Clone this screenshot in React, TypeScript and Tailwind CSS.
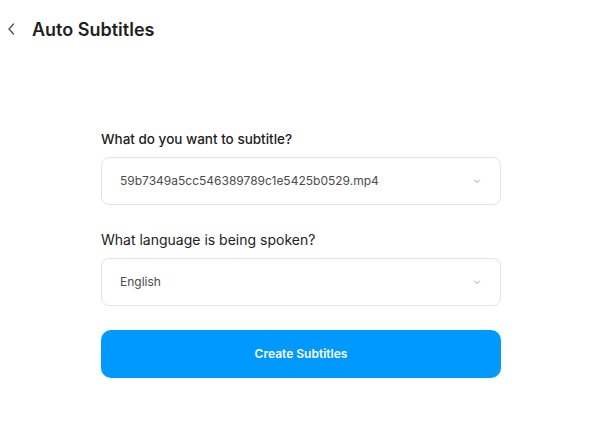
import React from "react";

function Chevron() {
  return (
    <svg width="10" height="10" viewBox="0 0 10 10" fill="none" stroke="#9ca3af" strokeWidth="1" strokeLinecap="round" strokeLinejoin="round">
      <path d="M2.5 4 L5 6.5 L7.5 4" />
    </svg>
  );
}

function Select({ value }: { value: string }) {
  return (
    <div className="flex h-[48px] w-[400px] items-center justify-between rounded-[8px] border border-[#e3e3e3] bg-white pl-[18px] pr-[18px]">
      <span className="text-[12px] text-[#4b4b4b]">{value}</span>
      <Chevron />
    </div>
  );
}

export default function App() {
  return (
    <div className="h-[444px] w-[612px] bg-white" style={{ fontFamily: "Inter, 'Noto Sans', sans-serif" }}>
      <div className="flex h-[58px] items-center pl-[7px]">
        <svg width="10" height="14" viewBox="0 0 10 14" fill="none" stroke="#555" strokeWidth="1.4" strokeLinecap="round" strokeLinejoin="round">
          <path d="M6.5 2 L2 7 L6.5 12" />
        </svg>
        <span className="ml-[15px] text-[18px] font-semibold text-[#1f1f1f]">Auto Subtitles</span>
      </div>
      <div className="ml-[101px] mt-[71px] flex w-[400px] flex-col">
        <div className="mb-[8px] text-[13.5px] font-medium leading-[20px] text-[#222]">What do you want to subtitle?</div>
        <Select value="59b7349a5cc546389789c1e5425b0529.mp4" />
        <div className="mb-[8px] mt-[25px] text-[14px] leading-[20px] text-[#222]">What language is being spoken?</div>
        <Select value="English" />
        <button className="mt-[24px] flex h-[48px] w-[400px] items-center justify-center rounded-[10px] bg-[#0099ff] text-[12px] font-semibold text-white">
          Create Subtitles
        </button>
      </div>
    </div>
  );
}
